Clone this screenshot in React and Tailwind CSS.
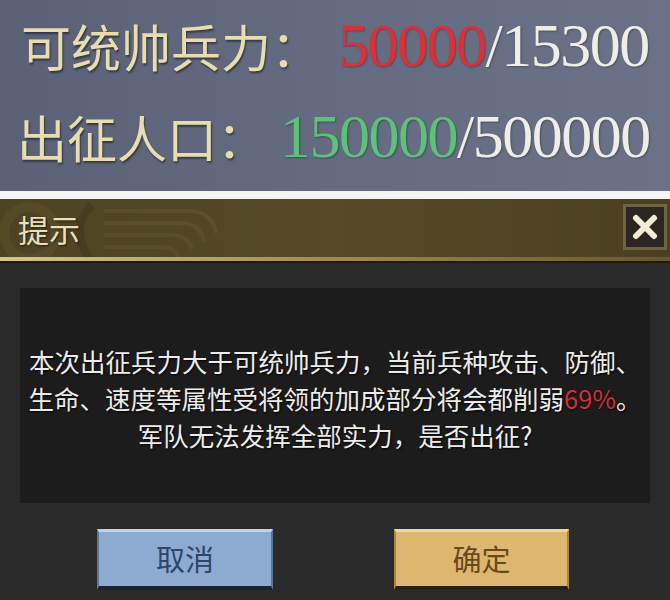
import React from 'react';

const CJK = "font-['Noto_Sans_CJK_SC','Noto_Sans_CJK_JP',sans-serif]";
const NUM = "font-['Liberation_Serif','Times_New_Roman',serif]";

// cloud-scroll pattern on the left of the title bar
function TitleSwirl() {
  return (
    <svg className="absolute left-0 top-0" width="230" height="62" viewBox="0 0 230 62" fill="none">
      <circle cx="30" cy="34" r="26" stroke="#6a5d33" strokeWidth="10" opacity="0.3" />
      <circle cx="30" cy="34" r="10" stroke="#6a5d33" strokeWidth="6" opacity="0.2" />
      <path d="M92 6 C 76 20, 76 44, 92 62" stroke="#3a321a" strokeWidth="8" opacity="0.4" />
      <path d="M104 12 H 190 C 206 12, 214 22, 216 34" stroke="#75683a" strokeWidth="4" opacity="0.3" />
      <path d="M104 24 H 180 C 196 24, 202 32, 204 42" stroke="#75683a" strokeWidth="4" opacity="0.28" />
      <path d="M104 36 H 170 C 184 36, 190 42, 192 50" stroke="#75683a" strokeWidth="4" opacity="0.25" />
      <path d="M104 48 H 160 C 170 48, 176 52, 178 58" stroke="#75683a" strokeWidth="4" opacity="0.22" />
    </svg>
  );
}

function StatRow({ label, value, total, valueColor, gap, pad }) {
  return (
    <div className={`flex items-center h-[56px] ${pad}`}>
      <span className={`${CJK} text-[50px] leading-none text-[#e8ddae] [text-shadow:1px_2px_2px_rgba(0,0,0,0.45)]`}>
        {label}
      </span>
      <span className={`${NUM} text-[62px] leading-none tracking-[-1.5px] ${gap} [text-shadow:1px_1px_2px_rgba(0,0,0,0.3)]`}>
        <span className={valueColor}>{value}</span>
        <span className="text-[#efeee6]">/{total}</span>
      </span>
    </div>
  );
}

export default function App() {
  return (
    <div className="w-[670px] h-[600px] overflow-hidden flex flex-col bg-[#2a2a2a]">
      {/* troop summary */}
      <section className="h-[191px] flex flex-col pt-[17px] gap-[35px] bg-gradient-to-r from-[#5a6177] via-[#656c82] to-[#6b7288]">
        <StatRow label="可统帅兵力：" value="50000" total="15300" valueColor="text-[#dc2f36]" gap="ml-[17px]" pad="pl-[21px]" />
        <StatRow label="出征人口：" value="150000" total="500000" valueColor="text-[#5cc27a]" gap="ml-[13px]" pad="pl-[17px]" />
      </section>

      <div className="h-[8px] bg-[#f5f5f3]" />

      {/* prompt dialog */}
      <div className="flex-1 flex flex-col bg-[#2a2a2a]">
        <header className="relative h-[64px] flex items-center justify-between overflow-hidden bg-gradient-to-r from-[#4d4322] via-[#564a27] to-[#4a3f20]">
          <TitleSwirl />
          <div className="absolute left-0 right-0 bottom-[2px] h-[4px] bg-gradient-to-r from-[#d8c685] via-[#a08c4a] to-[#66572c]" />
          <div className="absolute left-0 right-0 bottom-0 h-[2px] bg-[#1e1a10]" />
          <h2 className={`${CJK} relative pl-[18px] pb-[4px] text-[31px] text-[#ebe0bc] [text-shadow:1px_1px_2px_rgba(0,0,0,0.6)]`}>
            提示
          </h2>
          <button className="relative mr-[3px] mb-[8px] w-[44px] h-[46px] border-[3px] border-[#6e6444] bg-[#2b2622] flex items-center justify-center">
            <svg width="28" height="28" viewBox="0 0 28 28">
              <path d="M5 5 L23 23 M23 5 L5 23" stroke="#f1ecd2" strokeWidth="6" strokeLinecap="round" />
            </svg>
          </button>
        </header>

        <div className="px-[20px] pt-[25px]">
          <div className={`${CJK} h-[215px] pt-[3px] bg-[#1c1c1c] flex items-center justify-center text-center text-[25.5px] leading-[37px] text-[#ececea] [text-shadow:1px_1px_2px_rgba(0,0,0,0.9)]`}>
            <p>
              本次出征兵力大于可统帅兵力，当前兵种攻击、防御、
              <br />
              生命、速度等属性受将领的加成部分将会都削弱<span className="text-[#d2303e]">69%</span>。
              <br />
              军队无法发挥全部实力，是否出征?
            </p>
          </div>
        </div>

        <div className="flex pt-[26px]">
          <button className={`${CJK} ml-[97px] w-[176px] h-[61px] bg-[#8dabd1] border-t-[3px] border-t-[#bcd3ea] border-b-[4px] border-b-[#1c2232] border-x-[2px] border-x-[#5d7698] text-[29px] text-[#2d4669]`}>
            取消
          </button>
          <button className={`${CJK} ml-[121px] w-[175px] h-[61px] bg-[#ddb66f] border-t-[3px] border-t-[#f1d79c] border-b-[4px] border-b-[#2a2010] border-x-[2px] border-x-[#a8843e] text-[29px] text-[#6a4918]`}>
            确定
          </button>
        </div>
      </div>
    </div>
  );
}
